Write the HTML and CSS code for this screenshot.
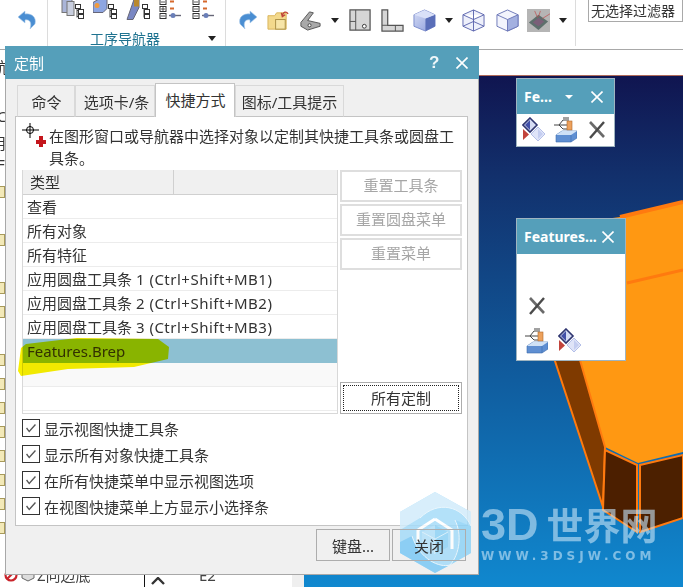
FILE: index.html
```html
<!DOCTYPE html>
<html lang="zh-CN">
<head>
    <meta charset="UTF-8">
    <title>定制</title>
    <link rel="stylesheet" href="styles.css">
</head>
<body>
<svg class="defs" width="0" height="0">
    <defs>
        <linearGradient id="cubeFace" x1="0" y1="0" x2="1" y2="1">
            <stop offset="0" stop-color="#d5dcf4"/>
            <stop offset="1" stop-color="#8b9cdc"/>
        </linearGradient>
        <symbol id="arrowIcon" viewBox="0 0 20 20">
            <path d="M1 7 L8 1 L8 4 C14 3 20 7 18 14 L13 19 C15 13 13 9 8 10 L8 13 Z" fill="#4a8ed2" stroke="#a9c9ea" stroke-width=".6"/>
        </symbol>
        <symbol id="diamondIcon" viewBox="0 0 24 26">
            <path d="M8 1 L15 8 L8 15 L1 8 Z" fill="#d5dbf3" stroke="#2f3570" stroke-width="1.6"/>
            <path d="M8 3 V13 L3 8 Z" fill="#4350a8"/>
            <path d="M16 10 L23 17 L16 24 L9 17 Z" fill="#dfe4f8" stroke="#b4bfe8"/>
            <path d="M16 12 V22 L21 17 Z" fill="#c4cdf0"/>
            <path d="M1 12 L7 17.5 L1 23 Z" fill="#c2443c"/>
        </symbol>
        <symbol id="hookIcon" viewBox="0 0 24 26">
            <path d="M1 8 H6 L10 3 H16 M6 8 L10 12 H16 M6 8 H16 M10 1 H16" fill="none" stroke="#444"/>
            <rect x="14" y="4" width="5" height="9" fill="#eda15c" stroke="#b06a2c" stroke-width=".6"/>
            <path d="M3 18 L9 14 H24 V21 L18 25 H3 Z" fill="#5f8fd2" stroke="#3d6cab" stroke-width=".6"/>
            <path d="M3 18 H18 L24 14 H9 Z" fill="#cfe1f6"/>
            <path d="M18 18 V25" stroke="#3d6cab" stroke-width=".6"/>
        </symbol>
        <symbol id="crossIcon" viewBox="0 0 18 18">
            <path d="M2 1 L16 16" stroke="#6a6a6a" stroke-width="2.6"/>
            <path d="M16 1 L2 17" stroke="#4a4a4a" stroke-width="2.4"/>
        </symbol>
        <symbol id="closeIcon" viewBox="0 0 12 12">
            <path d="M.5 .5 L11.5 11.5 M11.5 .5 L.5 11.5" stroke="#fff" stroke-width="1.6" fill="none"/>
        </symbol>
    </defs>
</svg>

<div class="desktop">
    <div class="ribbon">
        <div class="rgroup rgroup-undo">
            <svg class="ic20"><use href="#arrowIcon"/></svg>
        </div>
        <div class="rgroup rgroup-nav">
            <div class="nav-icons">
                <svg class="nav-ic" viewBox="0 0 24 20">
                    <rect x="2" y="-3" width="10" height="16" fill="#aab5d8" stroke="#777"/>
                    <rect x="7" y="2" width="7" height="14" fill="#c9cfdf" stroke="#777"/>
                    <path d="M17 6 V18 M17 11 H20 M17 17 H20" stroke="#444" fill="none"/>
                    <rect x="15.5" y="5" width="5" height="4" fill="#fff" stroke="#333"/>
                    <rect x="18.5" y="10" width="5" height="4" fill="#fff" stroke="#333"/>
                    <rect x="18.5" y="15" width="5" height="4" fill="#fff" stroke="#333"/>
                </svg>
                <svg class="nav-ic" viewBox="0 0 24 20">
                    <path d="M0 3 L5 0 H14 V9 L10 13 H0 Z" fill="#8ea6e2" stroke="#667"/>
                    <circle cx="4" cy="6" r="2.5" fill="#f09b3e"/>
                    <path d="M17 6 V18 M17 11 H20 M17 17 H20" stroke="#444" fill="none"/>
                    <rect x="15.5" y="5" width="5" height="4" fill="#fff" stroke="#333"/>
                    <rect x="18.5" y="10" width="5" height="4" fill="#fff" stroke="#333"/>
                    <rect x="18.5" y="15" width="5" height="4" fill="#fff" stroke="#333"/>
                </svg>
                <svg class="nav-ic" viewBox="0 0 24 20">
                    <path d="M8 0 H13 V8 L7 20 H1 Z" fill="#7a88c4" stroke="#667"/>
                    <rect x="8" y="-2" width="5" height="9" fill="#b9892f"/>
                    <path d="M18 6 V18 M18 11 H21 M18 17 H21" stroke="#444" fill="none"/>
                    <rect x="16.5" y="5" width="5" height="4" fill="#fff" stroke="#333"/>
                    <rect x="18.5" y="10" width="5" height="4" fill="#fff" stroke="#333"/>
                    <rect x="18.5" y="15" width="5" height="4" fill="#fff" stroke="#333"/>
                </svg>
                <svg class="nav-ic" viewBox="0 0 24 20">
                    <rect x="1" y="0" width="6" height="5" fill="#fff" stroke="#333"/>
                    <rect x="1" y="7" width="6" height="5" fill="#fff" stroke="#333"/>
                    <rect x="1" y="14" width="6" height="5" fill="#fff" stroke="#333"/>
                    <path d="M2 9.5 H6 M4 7.5 V11.5 M2 2.5 H6 M2 16.5 H6" stroke="#333" stroke-width=".8"/>
                    <path d="M11 2 H15 M11 9 H15" stroke="#d6692c" stroke-width="2"/>
                    <path d="M10 16 H22" stroke="#667" stroke-width="1.4"/>
                    <circle cx="14" cy="16" r="2.5" fill="#6a7fb8"/>
                </svg>
                <svg class="nav-ic" viewBox="0 0 24 20">
                    <rect x="1" y="0" width="6" height="5" fill="#fff" stroke="#333"/>
                    <rect x="1" y="7" width="6" height="5" fill="#fff" stroke="#333"/>
                    <rect x="1" y="14" width="6" height="5" fill="#fff" stroke="#333"/>
                    <path d="M2 9.5 H6 M2 2.5 H6 M2 16.5 H6" stroke="#333" stroke-width=".8"/>
                    <path d="M11 2 H15 M11 9 H15" stroke="#d6692c" stroke-width="2"/>
                    <path d="M10 16 H22" stroke="#667" stroke-width="1.4"/>
                    <circle cx="14" cy="16" r="2.5" fill="#6a7fb8"/>
                </svg>
            </div>
            <div class="nav-label">工序导航器</div>
            <span class="caret nav-caret"></span>
        </div>
        <div class="rgroup rgroup-tools">
            <svg class="ic20 flip"><use href="#arrowIcon"/></svg>
            <svg class="ic24" viewBox="0 0 24 22">
                <path d="M1 6 H8 L10 3 H20 V20 H1 Z" fill="#f3d98c" stroke="#d9b45a"/>
                <rect x="9" y="10" width="10" height="10" fill="#f7e5a8" stroke="#a98f45"/>
                <path d="M16 6 C17 2 20 1 22 4 M15 3 L16 7 L19 5" fill="none" stroke="#c0443a" stroke-width="1.4"/>
            </svg>
            <svg class="ic24" viewBox="0 0 24 22">
                <path d="M2 13 L11 2 L15 3 L9 11 L22 14 L22 17 L9 21 L2 17 Z" fill="#a9a9a9" stroke="#555"/>
                <circle cx="11" cy="16" r="1.6" fill="#fff" stroke="#444"/>
            </svg>
            <span class="caret"></span>
            <svg class="ic24 gap-s" viewBox="0 0 24 24">
                <path d="M1 1 H22 V22 H1 Z" fill="#d6d6d6" stroke="#555" stroke-width="1.3"/>
                <path d="M7 1 V22 M1 13 H7" stroke="#555" fill="none"/>
                <circle cx="16" cy="18" r="2" fill="#fff" stroke="#333"/>
            </svg>
            <svg class="ic24" viewBox="0 0 24 24">
                <path d="M1 1 H7 V17 H23 V23 H1 Z" fill="#d6d6d6" stroke="#555" stroke-width="1.3"/>
                <path d="M1 17 H7 M15 17 V23" stroke="#555"/>
            </svg>
            <svg class="ic24" viewBox="0 0 24 24">
                <path d="M1 6 L12 1 L23 6 V18 L13 23 L1 18 Z" fill="url(#cubeFace)" stroke="#7b8ccc"/>
                <path d="M13 10 L23 6 V18 L13 23 Z" fill="#5a6eb8"/>
                <path d="M1 6 L12 1 L23 6 L13 10 Z" fill="#d9e0f8"/>
            </svg>
            <span class="caret"></span>
            <svg class="ic24" viewBox="0 0 24 24">
                <path d="M1 6 L12 1 L23 6 V18 L12 23 L1 18 Z M1 6 L12 11 L23 6 M12 11 V23 M12 1 V13 M1 18 L12 13 L23 18" fill="#eef0fb" stroke="#5e67b0"/>
            </svg>
            <svg class="ic24 gap-m" viewBox="0 0 24 24">
                <path d="M1 6 L12 1 L23 6 V18 L12 23 L1 18 Z" fill="#f2f4fd" stroke="#6d78b8"/>
                <path d="M12 11 L23 6 V18 L12 23 Z" fill="#a3b0e0" stroke="#6d78b8"/>
                <path d="M1 6 L12 11" stroke="#6d78b8"/>
            </svg>
            <svg class="ic24 render" viewBox="0 0 24 24">
                <rect width="24" height="24" fill="#b5b5b5"/>
                <path d="M2 14 L12 6 L22 13 L12 22 Z" fill="#5d6f6c"/>
                <path d="M6 14 L12 9 L18 13 L12 18 Z" fill="#7a5f78"/>
                <path d="M8 2 L11 9 M14 2 L12 8 M16 10 L24 5" stroke="#c04a4a" stroke-width=".7"/>
            </svg>
            <span class="caret"></span>
        </div>
        <div class="rgroup rgroup-filter">
            <div class="filter-box">无选择过滤器</div>
        </div>
    </div>

    <div class="viewport">
        <svg class="solid" viewBox="0 0 379 512" width="379" height="512">
            <path d="M256 150 L316 142 L379 127 L379 377 L334 388 L301 372 L278 305 L266 270 Z" fill="#ff9812"/>
            <path d="M323 208 L379 195" stroke="#ff7a0f" stroke-width="3" fill="none"/>
            <path d="M316 142 L379 127" stroke="#ff7a0f" stroke-width="4" fill="none"/>
            <path d="M249 280 L276 285 L301 372 L299 432 Z" fill="#7f3a00" stroke="#ff7a0f" stroke-width="2"/>
            <path d="M301 375 L333 390 L333 457 L299 435 Z" fill="#4c1f00" stroke="#ff7a0f" stroke-width="2"/>
            <path d="M336 390 L379 380 L379 443 L336 457 Z" fill="#4c2000" stroke="#ff7a0f" stroke-width="2"/>
        </svg>
    </div>

    <div class="tree-edge">
        <div class="tree-row">
            <svg class="tree-no" viewBox="0 0 14 14"><circle cx="7" cy="7" r="5.5" fill="#fff" stroke="#c9242b" stroke-width="2.2"/><path d="M3 11 L11 3" stroke="#c9242b" stroke-width="2.2"/></svg>
            <svg class="tree-ic" viewBox="0 0 14 14"><path d="M1 3 L7 1 L13 3 V10 L7 13 L1 10 Z" fill="#ddd" stroke="#666"/></svg>
            <span class="tree-name">Z向边底</span>
            <span class="tree-check"><svg viewBox="0 0 14 8" width="14" height="8"><path d="M1 7 L7 1 L13 7" fill="none" stroke="#333" stroke-width="2.4"/></svg></span>
            <span class="tree-code">E2</span>
        </div>
    </div>

    <div class="left-rail">
        <span class="rail-txt">航</span>
        <span class="rail-txt">C</span>
        <span class="rail-txt">用</span>
        <span class="rail-txt">F</span>
        <span class="rail-f r1"></span><span class="rail-f r2"></span><span class="rail-f r3"></span>
        <span class="rail-f r4"></span><span class="rail-f r5"></span><span class="rail-f r6"></span>
        <span class="rail-f r7"></span><span class="rail-f r8"></span><span class="rail-f r9"></span>
        <span class="rail-f r10"></span><span class="rail-f r11"></span><span class="rail-f r12"></span>
    </div>

    <div class="dialog">
        <div class="titlebar">
            <span class="title">定制</span>
            <span class="help">?</span>
            <svg class="x12"><use href="#closeIcon"/></svg>
        </div>
        <div class="tabs">
            <div class="tab t1">命令</div>
            <div class="tab t2">选项卡/条</div>
            <div class="tab t3 active">快捷方式</div>
            <div class="tab t4">图标/工具提示</div>
        </div>
        <div class="panel">
            <div class="hint">
                <svg class="hint-ic" viewBox="0 0 24 24">
                    <path d="M0 7 H17 M8 0 V15" stroke="#000" fill="none"/>
                    <circle cx="8" cy="7" r="3.5" fill="none" stroke="#000"/>
                    <path d="M17 13 H21 V17 H24 V21 H21 V24 H17 V21 H14 V17 H17 Z" fill="#c4161c"/>
                </svg>
                <p>在图形窗口或导航器中选择对象以定制其快捷工具条或圆盘工具条。</p>
            </div>
            <div class="main">
                <div class="list">
                    <div class="list-head"><span class="col-a">类型</span><span class="col-b"></span></div>
                    <div class="row">查看</div>
                    <div class="row">所有对象</div>
                    <div class="row">所有特征</div>
                    <div class="row">应用圆盘工具条 <span class="lat">1 (Ctrl+Shift+MB1)</span></div>
                    <div class="row">应用圆盘工具条 <span class="lat">2 (Ctrl+Shift+MB2)</span></div>
                    <div class="row">应用圆盘工具条 <span class="lat">3 (Ctrl+Shift+MB3)</span></div>
                    <div class="row selected">Features.Brep</div>
                    <div class="row alt"></div>
                    <div class="row"></div>
                </div>
                <div class="side">
                    <button class="btn off">重置工具条</button>
                    <button class="btn off">重置圆盘菜单</button>
                    <button class="btn off">重置菜单</button>
                    <button class="btn focus"><span>所有定制</span></button>
                </div>
            </div>
            <div class="checks">
                <label class="check"><svg class="cb" viewBox="0 0 18 18"><path d="M4 9 L7 13 L14 5" fill="none" stroke="#555" stroke-width="1.5"/></svg>显示视图快捷工具条</label>
                <label class="check"><svg class="cb" viewBox="0 0 18 18"><path d="M4 9 L7 13 L14 5" fill="none" stroke="#555" stroke-width="1.5"/></svg>显示所有对象快捷工具条</label>
                <label class="check"><svg class="cb" viewBox="0 0 18 18"><path d="M4 9 L7 13 L14 5" fill="none" stroke="#555" stroke-width="1.5"/></svg>在所有快捷菜单中显示视图选项</label>
                <label class="check"><svg class="cb" viewBox="0 0 18 18"><path d="M4 9 L7 13 L14 5" fill="none" stroke="#555" stroke-width="1.5"/></svg>在视图快捷菜单上方显示小选择条</label>
            </div>
        </div>
        <div class="footer">
            <button class="btn foot">键盘...</button>
            <button class="btn foot">关闭</button>
        </div>
        <!-- yellow marker stroke drawn over the selected row -->
        <svg class="marker" viewBox="0 0 160 42" width="160" height="42">
            <path d="M9 7 L60 1 L141 2 L152 10 L151 22 L117 30 L51 32 L4 39 L1 34 L4 11 Z" fill="#f7ef00"/>
        </svg>
    </div>

    <div class="mini mini-a">
        <div class="mini-title">
            <span class="mini-name">Fe...</span>
            <span class="caret white"></span>
            <svg class="x12"><use href="#closeIcon"/></svg>
        </div>
        <div class="mini-body row-icons">
            <svg class="ic24b"><use href="#diamondIcon"/></svg>
            <svg class="ic24b"><use href="#hookIcon"/></svg>
            <svg class="ic18"><use href="#crossIcon"/></svg>
        </div>
    </div>

    <div class="mini mini-b">
        <div class="mini-title">
            <span class="mini-name">Features...</span>
            <svg class="x12"><use href="#closeIcon"/></svg>
        </div>
        <div class="mini-body col-icons">
            <svg class="ic18"><use href="#crossIcon"/></svg>
            <div class="icon-pair">
                <svg class="ic24b"><use href="#hookIcon"/></svg>
                <svg class="ic24b"><use href="#diamondIcon"/></svg>
            </div>
        </div>
    </div>

    <div class="watermark">
        <svg class="wm-logo" viewBox="0 0 72 82" width="72" height="82">
            <path d="M35 0 L71 20 V61 L35 81 L0 61 V20 Z" fill="#a6dcf9"/>
            <path d="M35 0 L71 20 V34 C62 14 38 8 20 26 L0 38 V20 Z" fill="#d2ecfb"/>
            <path d="M71 34 V61 L50 73 C60 62 62 42 55 28 Z" fill="#8fd3f7"/>
            <path d="M0 61 L35 81 L50 73 C40 76 20 68 12 44 L0 50 Z" fill="#7bc9f5"/>
            <path d="M12 44 C20 68 40 76 50 73 M20 26 C38 8 62 14 71 34 M55 28 C62 42 60 62 50 73" fill="none" stroke="#e6f5fd" stroke-width="1"/>
            <path d="M35 27 L52 38 V57 M18 38 L35 27 M18 38 V50" fill="none" stroke="#fff" stroke-width="3"/>
            <path d="M35 33 L48 40 V55 L35 62 Z" fill="#8fd3f7"/>
            <path d="M35 33 L22 40 V55 L35 62 Z" fill="#b4e1fa"/>
            <path d="M22 40 L35 47 L48 40 M35 47 V62" fill="none" stroke="#d8f0fc" stroke-width="1"/>
        </svg>
        <div class="wm-text">
            <div class="wm-big">3D<span class="wm-cjk">世界网</span></div>
            <div class="wm-url">WWW.3DSJW.COM</div>
        </div>
    </div>
</div>
</body>
</html>
```

FILE: styles.css
```css
* {
    box-sizing: border-box;
}
html, body {
    margin: 0;
    padding: 0;
    background: #fff;
}
body {
    font-family: "Noto Sans", "Noto Sans CJK SC", sans-serif;
    font-size: 15px;
    color: #333;
}
.defs {
    position: absolute;
}
.desktop {
    position: relative;
    width: 683px;
    height: 587px;
    overflow: hidden;
    background: #fff;
}

/* ribbon */
.ribbon {
    display: flex;
    height: 50px;
    border-bottom: 1px solid #a8a8a8;
}
.rgroup {
    position: relative;
    height: 46px;
    border-right: 1px solid #dcdcdc;
    flex: none;
}
.rgroup-undo {
    width: 48px;
    padding: 10px 0 0 17px;
}
.rgroup-nav {
    width: 178px;
}
.nav-icons {
    display: flex;
    gap: 9px;
    padding-left: 12px;
    margin-top: -1px;
}
.nav-ic {
    width: 24px;
    height: 21px;
    flex: none;
}
.nav-label {
    margin: 10px 0 0 42px;
    font-size: 14px;
    line-height: 18px;
    color: #1f7390;
}
.nav-caret {
    position: absolute;
    left: 160px;
    top: 36px;
}
.rgroup-tools {
    display: flex;
    align-items: center;
    gap: 9px;
    width: 349px;
    height: 40px;
    padding-left: 12px;
    border-right: 0;
}
.rgroup-filter {
    flex: 1;
    border-right: 0;
    border-left: 1px solid #dcdcdc;
    padding-left: 12px;
}
.filter-box {
    height: 23px;
    margin-top: -1px;
    border: 1px solid #a9a9a9;
    padding-left: 2px;
    line-height: 22px;
    font-size: 14px;
    white-space: nowrap;
    overflow: hidden;
}
.ic20 {
    width: 20px;
    height: 20px;
    flex: none;
}
.flip {
    transform: scaleX(-1);
}
.ic24 {
    width: 23px;
    height: 23px;
    flex: none;
}
.render {
    margin-left: -1px;
}
.gap-s {
    margin-left: 1px;
}
.gap-m {
    margin-left: 2px;
}
.caret {
    display: inline-block;
    width: 0;
    height: 0;
    border-left: 4px solid transparent;
    border-right: 4px solid transparent;
    border-top: 5px solid #222;
    flex: none;
}
.caret.white {
    border-top-color: #fff;
    border-top-width: 4px;
}

/* 3D view */
.viewport {
    position: absolute;
    left: 304px;
    top: 75px;
    width: 379px;
    height: 512px;
    border-top: 1px solid #b06a5a;
    background: linear-gradient(#101550 0, #12306c 100px, #105c9e 300px, #1088cf 512px);
}
.solid {
    display: block;
    margin-top: -1px;
}

/* bits of the part navigator left visible behind the dialog */
.tree-edge {
    position: absolute;
    left: 0;
    top: 562px;
    width: 304px;
    height: 25px;
    background: #fff;
    border-right: 12px solid #efefef;
    overflow: hidden;
}
.tree-row {
    display: flex;
    align-items: center;
    height: 25px;
    font-size: 15px;
    color: #444;
}
.tree-no {
    width: 14px;
    height: 14px;
    margin-left: 4px;
    flex: none;
}
.tree-ic {
    width: 14px;
    height: 14px;
    margin-left: 3px;
    flex: none;
}
.tree-name {
    width: 109px;
    padding-left: 2px;
    white-space: nowrap;
    flex: none;
}
.tree-check {
    display: flex;
    align-items: center;
    width: 55px;
    height: 25px;
    padding: 12px 0 0 6px;
    border-left: 1px solid #111;
    flex: none;
}
.tree-code {
    white-space: nowrap;
}
.left-rail {
    position: absolute;
    left: 0;
    top: 46px;
    width: 5px;
    height: 529px;
    overflow: hidden;
    font-size: 15px;
    color: #333;
}
.rail-txt {
    position: absolute;
    left: -8px;
}
.rail-txt:nth-child(1) { top: 10px; }
.rail-txt:nth-child(2) { top: 60px; left: -3px; }
.rail-txt:nth-child(3) { top: 86px; left: -9px; }
.rail-txt:nth-child(4) { top: 108px; left: -3px; }
.rail-f {
    position: absolute;
    left: 0;
    width: 5px;
    height: 12px;
    background: #f3e9b8;
    border: 1px solid #a89a5a;
    border-left: 0;
}
.r1 { top: 140px; }
.r2 { top: 188px; }
.r3 { top: 236px; }
.r4 { top: 260px; }
.r5 { top: 308px; }
.r6 { top: 332px; }
.r7 { top: 356px; }
.r8 { top: 380px; }
.r9 { top: 404px; }
.r10 { top: 428px; }
.r11 { top: 452px; }
.r12 { top: 476px; }

/* main dialog */
.dialog {
    position: absolute;
    left: 5px;
    top: 46px;
    width: 474px;
    height: 529px;
    background: #f0f0f0;
    border: 1px solid #a8a8a8;
    border-top: 0;
}
.titlebar {
    display: flex;
    align-items: center;
    height: 33px;
    margin: 0 -1px;
    padding: 0 11px 0 9px;
    background: #559fba;
    color: #fff;
}
.title {
    flex: 1;
    font-size: 15px;
}
.help {
    width: 27px;
    font-family: "Liberation Sans", sans-serif;
    font-size: 17px;
    font-weight: bold;
    color: #eef6f9;
}
.x12 {
    width: 12px;
    height: 12px;
    flex: none;
}
.tabs {
    display: flex;
    align-items: flex-end;
    height: 38px;
    padding-left: 11px;
    margin-bottom: -1px;
}
.tab {
    position: relative;
    height: 32px;
    padding-left: 1px;
    line-height: 33px;
    text-align: center;
    background: #f0f0f0;
    border: 1px solid #d9d9d9;
    border-bottom: 1px solid #c4c4c4;
    white-space: nowrap;
    font-size: 15px;
}
.t1 { width: 58px; }
.t2 { width: 80px; padding-left: 3px; }
.t3 { width: 80px; }
.t4 { width: 109px; padding-left: 0; }
.tab.active {
    height: 34px;
    background: #fff;
    border-color: #c4c4c4;
    border-bottom: 0;
    z-index: 1;
}
.panel {
    width: 453px;
    height: 410px;
    margin-left: 9px;
    padding: 0 0 0 6px;
    background: #fff;
    border: 1px solid #c4c4c4;
}
.hint {
    display: flex;
    height: 53px;
    padding-top: 6px;
}
.hint-ic {
    width: 24px;
    height: 24px;
    flex: none;
}
.hint p {
    width: 410px;
    margin: 2px 0 0 3px;
    line-height: 22px;
    font-size: 15px;
}
.main {
    display: flex;
    gap: 2px;
    height: 245px;
}
.list {
    width: 316px;
    height: 244px;
    border: 1px solid #d8d8d8;
    border-top: 0;
}
.list-head {
    display: flex;
    height: 25px;
    background: #f0f0f0;
    border-bottom: 1px solid #d0d0d0;
    line-height: 24px;
}
.col-a {
    width: 151px;
    padding-left: 7px;
    border-right: 1px solid #d0d0d0;
}
.row {
    height: 24px;
    padding-left: 4px;
    line-height: 24px;
    border-bottom: 1px solid #ececec;
    white-space: nowrap;
}
.lat {
    letter-spacing: .5px;
}
.row.selected {
    background: #8dc0d2;
    border-bottom: 0;
}
.row.alt {
    background: #f9f9f9;
}
.side {
    display: flex;
    flex-direction: column;
    gap: 2px;
    width: 122px;
    height: 244px;
}
.btn {
    height: 32px;
    padding: 0;
    background: #fff;
    border: 1px solid #adadad;
    font-family: inherit;
    font-size: 15px;
    color: #333;
}
.btn.off {
    padding-bottom: 3px;
    color: #a6a6a6;
    border: 2px solid #dedede;
}
.btn.focus {
    margin-top: auto;
    padding: 2px;
    background: #fff;
}
.btn.focus span {
    display: block;
    height: 100%;
    line-height: 25px;
    border: 1px dotted #222;
}
.checks {
    display: flex;
    flex-direction: column;
    gap: 8px;
    padding-top: 4px;
}
.check {
    display: flex;
    align-items: center;
    gap: 4px;
    height: 18px;
    font-size: 15px;
}
.cb {
    width: 18px;
    height: 18px;
    background: #fff;
    border: 1px solid #333;
    flex: none;
}
.footer {
    display: flex;
    justify-content: flex-end;
    gap: 2px;
    padding: 3px 12px 0 0;
}
/* transparent and lifted so the watermark sits under their text */
.btn.foot {
    position: relative;
    z-index: 2;
    width: 74px;
    background: transparent;
}
.marker {
    position: absolute;
    left: 11px;
    top: 291px;
    mix-blend-mode: multiply;
}

/* floating shortcut bars */
.mini {
    position: absolute;
    background: #fff;
    border: 1px solid #9fb4c0;
}
.mini-a {
    left: 516px;
    top: 78px;
    width: 99px;
    height: 69px;
}
.mini-b {
    left: 516px;
    top: 218px;
    width: 110px;
    height: 143px;
}
.mini-title {
    display: flex;
    align-items: center;
    height: 35px;
    padding: 0 11px 0 7px;
    background: #559fba;
    color: #fff;
}
.mini-name {
    flex: 1;
    margin-top: -1px;
    font-family: "Noto Sans", sans-serif;
    font-size: 14px;
    font-weight: bold;
    white-space: nowrap;
}
.mini-a .caret {
    margin-right: 18px;
}
.row-icons {
    display: flex;
    align-items: center;
    gap: 7px;
    height: 32px;
    padding-left: 5px;
}
.row-icons .ic18 {
    margin-left: 4px;
}
.col-icons {
    display: flex;
    flex-direction: column;
    padding: 43px 0 0 11px;
}
.icon-pair {
    display: flex;
    gap: 10px;
    margin: 13px 0 0 -4px;
}
.ic24b {
    width: 24px;
    height: 26px;
    flex: none;
}
.ic18 {
    width: 18px;
    height: 18px;
    flex: none;
}

/* site watermark */
.watermark {
    position: absolute;
    z-index: 1;
    left: 400px;
    top: 492px;
    display: flex;
    gap: 9px;
    pointer-events: none;
}
.wm-logo {
    opacity: .85;
    flex: none;
}
.wm-big {
    margin-top: 7px;
    font-family: "Liberation Sans", sans-serif;
    font-size: 45px;
    line-height: 50px;
    font-weight: bold;
    white-space: nowrap;
    color: rgba(196, 226, 246, .62);
}
.wm-cjk {
    margin-left: 8px;
    font-family: "Noto Sans CJK SC", sans-serif;
    font-size: 37px;
}
.wm-url {
    font-family: "DejaVu Sans", sans-serif;
    font-size: 12px;
    line-height: 13px;
    font-weight: bold;
    letter-spacing: 4px;
    white-space: nowrap;
    color: rgba(196, 226, 246, .62);
}
```
